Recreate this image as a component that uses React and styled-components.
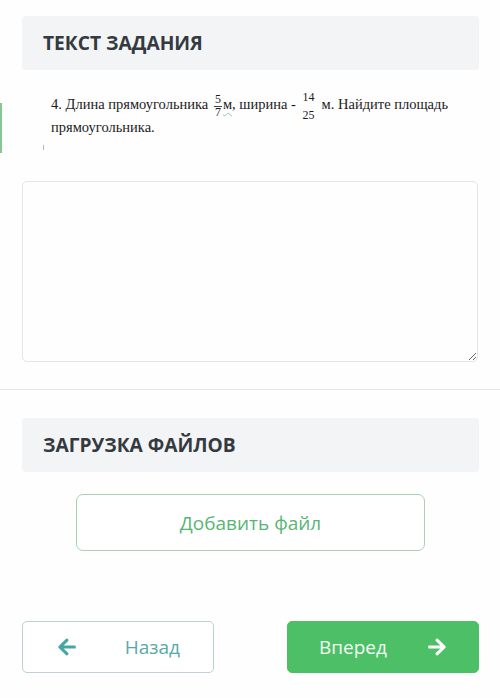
import React from "react";
import styled, { createGlobalStyle } from "styled-components";
import { FaArrowLeft, FaArrowRight } from "react-icons/fa";

const Global = createGlobalStyle`
  html, body { margin: 0; padding: 0; background: #ffffff; }
  body { font-family: "Open Sans", "Liberation Sans", sans-serif; }
  * { box-sizing: border-box; }
`;

const Page = styled.div`
  width: 500px;
  min-height: 698px;
  padding-top: 16px;
  display: flex;
  flex-direction: column;
  background: #fefefe;
`;

const SectionHeader = styled.h2`
  margin: 0 21px 0 22px;
  height: 54px;
  padding: 0 0 2px 21px;
  display: flex;
  align-items: center;
  background: #f2f4f6;
  border-radius: 4px;
  font-family: "Open Sans", sans-serif;
  font-weight: 700;
  font-size: 19.2px;
  color: #343a40;
`;

const TaskBody = styled.div`
  height: 111px;
  display: flex;
  align-items: flex-start;
`;

const Marker = styled.div`
  width: 2px;
  height: 50px;
  margin-top: 33px;
  background: #86c796;
`;

const TaskTextWrap = styled.div`
  margin-left: 49px;
  padding-top: 23px;
  display: flex;
  flex-direction: column;
`;

const TaskText = styled.p`
  margin: 0;
  width: 420px;
  font-family: "Liberation Serif", "Times New Roman", serif;
  font-size: 14.5px;
  line-height: 23px;
  color: #1c1c1c;
`;

const Frac = styled.span`
  display: inline-flex;
  flex-direction: column;
  align-items: center;
  vertical-align: middle;
  font-size: 12px;
  line-height: 11px;
  margin: -10px ${(p) => p.$gap}px -10px 2px;
  position: relative;
  top: ${(p) => p.$shift}px;
`;

const FracPart = styled.span`
  display: block;
  padding: 0 1px;
`;

const FracBar = styled.span`
  display: block;
  align-self: stretch;
  height: ${(p) => p.$h}px;
  border-top: 1px solid ${(p) => (p.$visible ? "#444" : "transparent")};
  margin-top: 1px;
`;

const Squiggle = styled.span`
  text-decoration: underline wavy #9cc2a8;
  text-decoration-thickness: 1px;
  text-underline-offset: 3px;
`;

const Caret = styled.span`
  display: block;
  width: 1px;
  height: 5px;
  margin: 6px 0 0 -8px;
  background: #b8b8b8;
`;

const Answer = styled.textarea`
  display: block;
  margin: 0 22px;
  width: 456px;
  height: 181px;
  border: 1px solid #e3e5e7;
  border-radius: 5px;
  background: #fefefe;
  resize: vertical;
  outline: none;
  font-family: "Open Sans", sans-serif;
`;

const Divider = styled.hr`
  margin: 27px 0 28px;
  border: 0;
  border-top: 1px solid #e2e4e6;
  width: 100%;
`;

const AddFile = styled.button`
  margin: 22px 0 0 76px;
  width: 349px;
  height: 57px;
  border: 1px solid #a9d0b6;
  border-radius: 7px;
  background: #ffffff;
  font-family: "Open Sans", sans-serif;
  font-size: 19px;
  color: #58b574;
  cursor: pointer;
`;

const NavRow = styled.div`
  margin: 70px 21px 0 22px;
  display: flex;
  justify-content: space-between;
`;

const NavButton = styled.button`
  width: 192px;
  height: 52px;
  display: flex;
  align-items: center;
  justify-content: space-between;
  padding: ${(p) => (p.$primary ? "0 31px 0 31px" : "0 33px 0 34px")};
  border-radius: 5px;
  border: 1px solid ${(p) => (p.$primary ? "#4dbf67" : "#b7d3d4")};
  background: ${(p) => (p.$primary ? "#4dbf67" : "#ffffff")};
  color: ${(p) => (p.$primary ? "#f1fbf3" : "#5aa9a9")};
  font-family: "Open Sans", sans-serif;
  font-size: 19px;
  cursor: pointer;
  svg { color: ${(p) => (p.$primary ? "#ffffff" : "#45a7a2")}; }
`;

function Fraction({ num, den, bar = true, gap = 2, shift = 0, barH = 1 }) {
  return (
    <Frac $gap={gap} $shift={shift}>
      <FracPart>{num}</FracPart>
      <FracBar $visible={bar} $h={barH} />
      <FracPart>{den}</FracPart>
    </Frac>
  );
}

export default function App() {
  return (
    <>
      <Global />
      <Page>
        <SectionHeader>ТЕКСТ ЗАДАНИЯ</SectionHeader>
        <TaskBody>
          <Marker />
          <TaskTextWrap>
            <TaskText>
              4. Длина прямоугольника <Fraction num="5" den="7" gap={1} />
              <Squiggle>м</Squiggle>, ширина -{" "}
              <Fraction num="14" den="25" bar={false} gap={6} barH={6} shift={1} />
              м. Найдите площадь прямоугольника.
            </TaskText>
            <Caret />
          </TaskTextWrap>
        </TaskBody>
        <Answer />
        <Divider />
        <SectionHeader>ЗАГРУЗКА ФАЙЛОВ</SectionHeader>
        <AddFile>Добавить файл</AddFile>
        <NavRow>
          <NavButton>
            <FaArrowLeft size={20} />
            <span>Назад</span>
          </NavButton>
          <NavButton $primary>
            <span>Вперед</span>
            <FaArrowRight size={20} />
          </NavButton>
        </NavRow>
      </Page>
    </>
  );
}
